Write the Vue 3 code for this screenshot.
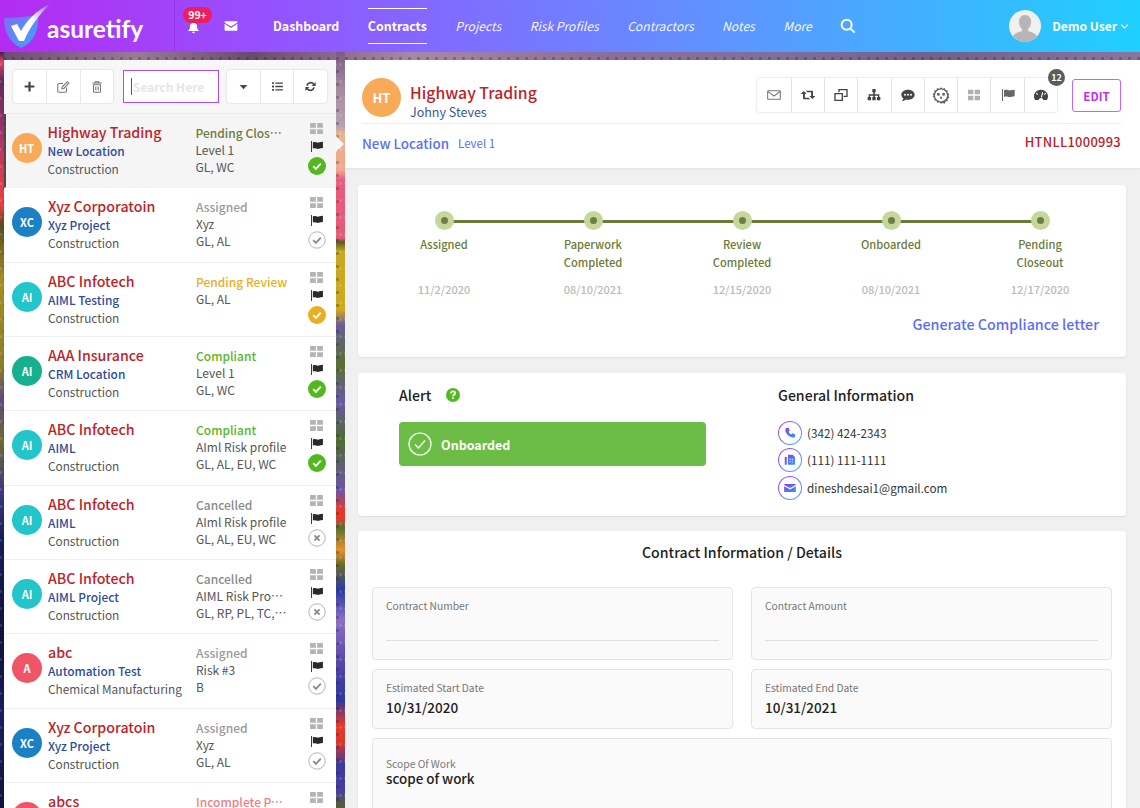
<template>
  <div class="page">
    <header class="topbar">
      <div class="brand">
        <svg class="logo" viewBox="0 0 50 50">
          <defs>
            <linearGradient id="shieldFill" x1="0" y1="0" x2="1" y2="1">
              <stop offset="0" stop-color="#7d6cf8" />
              <stop offset="1" stop-color="#3fa6f8" />
            </linearGradient>
            <linearGradient id="swooshFill" x1="0" y1="1" x2="1" y2="0">
              <stop offset="0" stop-color="#ffffff" />
              <stop offset="0.55" stop-color="#ffffff" />
              <stop offset="1" stop-color="#8f6bf5" />
            </linearGradient>
          </defs>
          <path d="M3 17C14 17 24 16 37 14C38 30 33 41 20 47C8 41 3 30 3 17Z" fill="url(#shieldFill)" />
          <path d="M10 25L16 23L20 30C26 19 36 9 49 3C40 12 29 25 23 40H18Z" fill="url(#swooshFill)" />
        </svg>
        <span class="brand-name">asuretify</span>
      </div>
      <div class="alerts">
        <div class="bell">
          <svg viewBox="0 0 24 24"><path :d="icons.bell" /></svg>
          <span class="bell-count">99+</span>
        </div>
        <svg class="mail" viewBox="0 0 24 24"><path :d="icons.mail" /></svg>
      </div>
      <nav class="nav">
        <a v-for="link in navLinks" :key="link.label" :class="link.kind">{{ link.label }}</a>
        <svg class="nav-search" viewBox="0 0 24 24"><circle cx="10" cy="10" r="7.5" /><path d="M15.5 15.5L22 22" /></svg>
      </nav>
      <div class="user">
        <svg class="user-photo" viewBox="0 0 32 32">
          <circle cx="16" cy="16" r="16" fill="#f0f0f0" />
          <path d="M16 5c4 0 6 3 6 7 0 3-1 5-3 7v2c3 1 7 2 9 5-3 4-7 6-12 6s-9-2-12-6c2-3 6-4 9-5v-2c-2-2-3-4-3-7 0-4 2-7 6-7z" fill="#b6b6b6" />
        </svg>
        <span>Demo User</span>
        <svg class="user-caret" viewBox="0 0 12 8"><path d="M1.5 1.5L6 6l4.5-4.5" /></svg>
      </div>
    </header>

    <main class="workspace">
      <aside class="list-panel">
        <div class="list-tools">
          <div class="btn-group">
            <button v-for="name in ['plus', 'edit', 'trash']" :key="name">
              <svg viewBox="0 0 24 24" :class="name"><path :d="icons[name]" /></svg>
            </button>
          </div>
          <div class="search-box"><i></i><span>Search Here</span></div>
          <div class="btn-group">
            <button v-for="name in ['caret', 'list', 'refresh']" :key="name">
              <svg viewBox="0 0 24 24" :class="name"><path :d="icons[name]" /></svg>
            </button>
          </div>
        </div>

        <div v-for="(row, index) in contracts" :key="index" class="row" :class="{ selected: index === 0 }">
          <div class="avatar" :style="{ background: row.color }">{{ row.initials }}</div>
          <div class="row-info">
            <div class="row-name">{{ row.name }}</div>
            <div class="row-project">{{ row.project }}</div>
            <div class="row-type">{{ row.type }}</div>
          </div>
          <div class="row-state">
            <div class="row-status" :style="{ color: row.statusColor }">{{ row.status }}</div>
            <div v-for="line in row.lines" :key="line" class="row-line">{{ line }}</div>
          </div>
          <div class="row-icons">
            <svg class="mini-grid" viewBox="0 0 14 12"><path :d="icons.grid" /></svg>
            <svg class="mini-flag" viewBox="0 0 14 12"><path :d="icons.flag" /></svg>
            <svg class="mark" viewBox="0 0 18 18">
              <circle cx="9" cy="9" :r="row.mark.solid ? 9 : 8.2" :fill="row.mark.solid ? row.mark.color : '#fff'" :stroke="row.mark.solid ? 'none' : '#b5b5b5'" />
              <path v-if="row.mark.kind === 'check'" d="M5.2 9.2l2.7 2.7 4.9-5.2" fill="none" :stroke="row.mark.solid ? '#fff' : '#8c8c8c'" stroke-width="1.9" />
              <path v-else d="M6.4 6.4l5.2 5.2M11.6 6.4l-5.2 5.2" fill="none" stroke="#8c8c8c" stroke-width="1.9" />
            </svg>
          </div>
        </div>
      </aside>

      <section class="detail">
        <div class="detail-head">
          <div class="head-top">
            <div class="avatar large">HT</div>
            <div class="head-title">
              <div class="head-name">Highway Trading</div>
              <div class="head-person">Johny Steves</div>
            </div>
            <div class="head-actions">
              <div class="action-group">
                <button v-for="name in actionIcons" :key="name">
                  <svg viewBox="0 0 24 24" :class="name"><path :d="icons[name]" /></svg>
                </button>
                <span class="action-count">12</span>
              </div>
              <button class="edit-btn">EDIT</button>
            </div>
          </div>
          <div class="head-bottom">
            <span class="location">New Location</span>
            <span class="level">Level 1</span>
            <span class="code">HTNLL1000993</span>
          </div>
        </div>

        <div class="card timeline-card">
          <div class="timeline">
            <div v-for="step in steps" :key="step.label" class="step">
              <div class="step-dot"></div>
              <div class="step-label">{{ step.label }}</div>
              <div class="step-date">{{ step.date }}</div>
            </div>
          </div>
          <a class="compliance">Generate Compliance letter</a>
        </div>

        <div class="card alert-card">
          <div class="alert-col">
            <div class="card-title">
              Alert
              <svg class="help" viewBox="0 0 14 14">
                <circle cx="7" cy="7" r="7" />
                <path d="M4.900 5.400c0-1.300.9-2 2.100-2s2.100.7 2.100 1.800c0 1.600-2.100 1.500-2.100 3.100" />
                <path d="M7 9.300v1.500" />
              </svg>
            </div>
            <div class="banner">
              <svg viewBox="0 0 24 24"><circle cx="12" cy="12" r="11" /><path d="M7 12.500l3.500 3.500 6.500-7.500" /></svg>
              Onboarded
            </div>
          </div>
          <div class="info-col">
            <div class="card-title">General Information</div>
            <div v-for="contact in contacts" :key="contact.text" class="contact">
              <span class="contact-icon">
                <svg viewBox="0 0 24 24"><path :d="icons[contact.icon]" fill="url(#contactFill)" /></svg>
              </span>
              {{ contact.text }}
            </div>
            <svg class="defs-only" width="0" height="0">
              <defs>
                <linearGradient id="contactFill" x1="0" y1="0" x2="1" y2="1">
                  <stop offset="0" stop-color="#8a3cf0" />
                  <stop offset="1" stop-color="#2a9ff0" />
                </linearGradient>
              </defs>
            </svg>
          </div>
        </div>

        <div class="card details-card">
          <div class="details-title">Contract Information / Details</div>
          <div class="fields">
            <div v-for="field in fields" :key="field.label" class="field" :class="field.kind">
              <label>{{ field.label }}</label>
              <div class="field-value">{{ field.value }}</div>
            </div>
          </div>
        </div>
      </section>
    </main>
  </div>
</template>

<script setup>
const icons = {
  bell: 'M12 2a1.800 1.800 0 0 1 1.800 1.800C17 4.600 18.500 7 18.500 10c0 4 1 5.500 3 7.500v1h-19v-1c2-2 3-3.500 3-7.500 0-3 1.500-5.400 4.700-6.200A1.800 1.800 0 0 1 12 2zM9.500 20h5a2.500 2.500 0 0 1-5 0z',
  mail: 'M2 4h20a1 1 0 0 1 1 1v.8L12 13 1 5.800V5a1 1 0 0 1 1-1zM1 8.200l11 7.200 11-7.200V19a1 1 0 0 1-1 1H2a1 1 0 0 1-1-1z',
  plus: 'M10 3h4v7h7v4h-7v7h-4v-7H3v-4h7z',
  edit: 'M18 13v6a2 2 0 0 1-2 2H5a2 2 0 0 1-2-2V8a2 2 0 0 1 2-2h7M10 15l.6-3.400L19.500 3 22 5.500 13.400 14.400z',
  trash: 'M9 3h6v2H9zM4 5h16M6 8v11.500A1.500 1.500 0 0 0 7.500 21h9a1.500 1.500 0 0 0 1.500-1.500V8zM10 11v7M14 11v7',
  caret: 'M5 9h14l-7 8z',
  list: 'M2 4h3.500v3.500H2zM8 4.500h14v2.500H8zM2 10.200h3.500v3.500H2zM8 10.700h14v2.500H8zM2 16.500h3.500V20H2zM8 17h14v2.500H8z',
  refresh: 'M4 10.500A8.500 8.500 0 0 1 18.800 6.300L21.500 3.500V11h-7.500l2.700-2.700A5.700 5.700 0 0 0 7 10.500zM20 13.500A8.500 8.500 0 0 1 5.200 17.700L2.500 20.500V13H10l-2.700 2.700A5.700 5.700 0 0 0 17 13.500z',
  envelope: 'M3.500 5.500h17a1 1 0 0 1 1 1v11a1 1 0 0 1-1 1h-17a1 1 0 0 1-1-1v-11a1 1 0 0 1 1-1zM3 7l9 6.500L21 7',
  retweet: 'M5.500 6L10 10.500H7.300V16H13l2.500 2.500H6a1.500 1.500 0 0 1-1.500-1.500v-6.500H1zM8.500 5.500H18a1.500 1.500 0 0 1 1.500 1.500v6.500H23L18.500 18 14 13.500h2.700V8H11z',
  clone: 'M8 3h14v12h-6v-2h4V5H10v3H8zM2 9h13v12H2zM4 11v8h9v-8z',
  sitemap: 'M9.500 3h5v5h-1.300v3H20v4h1.500v5h-5v-5H18v-2h-4.800v2h1.300v5h-5v-5h1.300v-2H6v2h1.500v5h-5v-5H4v-4h6.800V8H9.500z',
  comment: 'M12 4c5.800 0 10 3.300 10 7.500S17.800 19 12 19c-1 0-2-.1-2.900-.3C7.500 20 5.500 21 3 21c1.300-1.300 2-2.700 2.200-4C3.200 15.600 2 13.700 2 11.500 2 7.300 6.200 4 12 4zM7.500 10a1.500 1.500 0 1 0 0 3 1.500 1.500 0 0 0 0-3zM12 10a1.500 1.500 0 1 0 0 3 1.500 1.500 0 0 0 0-3zM16.500 10a1.500 1.500 0 1 0 0 3 1.500 1.500 0 0 0 0-3z',
  badge: 'M12 1.500l2.200 2 2.800-.9 1.100 2.800 2.900.6-.2 2.900 2.400 1.700L21.800 13l1.400 2.500-2.400 1.700.2 2.900-2.900.6-1.100 2.800-2.800-.9L12 23.500l-2.200-2-2.800.9-1.100-2.800-2.900-.6.2-2.900-2.400-1.700L2.200 13 .8 10.600l2.400-1.700L3 6l2.900-.6L7 2.600l2.800.9zM12 4.500a8 8 0 1 0 0 16 8 8 0 0 0 0-16zM8.500 9a2 2 0 1 0 0 4 2 2 0 0 0 0-4zM15.500 9a2 2 0 1 0 0 4 2 2 0 0 0 0-4zM12 14a1.500 1.500 0 1 0 0 3 1.500 1.500 0 0 0 0-3z',
  apps: 'M3 4h8v7H3zM13 4h8v7h-8zM3 13h8v7H3zM13 13h8v7h-8z',
  pennant: 'M3 3h1.500v18H3zM6 5c4-2 7 1 10 0 2-.6 4-1 6-1v10c-2 0-4 .4-6 1-3 1-6-2-10 0z',
  gauge: 'M12 4C6 4 1.500 8.500 1.500 14c0 2.200.7 4 1.800 5.500h5.200c.3-1.800 1.800-3 3.500-3s3.200 1.200 3.500 3h5.200c1.100-1.500 1.800-3.300 1.800-5.500C22.500 8.500 18 4 12 4zM13.700 7.500l1.600.4-1.900 7.700-1.600-.4zM5.500 8.800l2.300 2-1 1.200-2.300-2zM18.500 8.800l1 1.200-2.300 2-1-1.200z',
  grid: 'M0 0h6.300v5.200H0zM7.700 0H14v5.200H7.700zM0 6.800h6.300V12H0zM7.700 6.800H14V12H7.700z',
  flag: 'M1 0h1v12H1zM3 1.500c2.500-1 4.500.8 6.500.2 1.500-.5 3-.9 4.500-.9v6.800c-1.500 0-3 .4-4.500.9-2 .6-4-1.200-6.500-.2z',
  phone: 'M7 3l3 .5 1.500 4.500-2 1.800c1 2.200 2.700 3.900 4.700 4.800l1.800-2 4.500 1.500.5 3c0 1.800-1.600 3-3.500 2.900C10.500 19.500 4.500 13.500 4 7c0-2 1.300-3.800 3-4z',
  fax: 'M3 7h3.500v13H3zM8.500 3h8l4 4v13h-12zM11 10v2h2v-2zM15 10v2h2v-2zM11 14v2h2v-2zM15 14v2h2v-2z',
  mailSolid: 'M3 5h18a1 1 0 0 1 1 1v.7L12 12 2 6.700V6a1 1 0 0 1 1-1zM2 9l10 5.500L22 9v9a1 1 0 0 1-1 1H3a1 1 0 0 1-1-1z',
}

const navLinks = [
  { label: 'Dashboard', kind: 'strong' },
  { label: 'Contracts', kind: 'strong current' },
  { label: 'Projects', kind: 'soft' },
  { label: 'Risk Profiles', kind: 'soft' },
  { label: 'Contractors', kind: 'soft' },
  { label: 'Notes', kind: 'soft' },
  { label: 'More', kind: 'soft' },
]

const actionIcons = ['envelope', 'retweet', 'clone', 'sitemap', 'comment', 'badge', 'apps', 'pennant', 'gauge']

const okMark = { kind: 'check', solid: true, color: '#52b81f' }
const warnMark = { kind: 'check', solid: true, color: '#e8af22' }
const openMark = { kind: 'check', solid: false }
const closedMark = { kind: 'cross', solid: false }

const contracts = [
  { initials: 'HT', color: '#f9aa58', name: 'Highway Trading', project: 'New Location', type: 'Construction', status: 'Pending Closeout', statusColor: '#6e7b3c', lines: ['Level 1', 'GL, WC'], mark: okMark },
  { initials: 'XC', color: '#1c80c6', name: 'Xyz Corporatoin', project: 'Xyz Project', type: 'Construction', status: 'Assigned', statusColor: '#9a9a9a', lines: ['Xyz', 'GL, AL'], mark: openMark },
  { initials: 'AI', color: '#22c5c9', name: 'ABC Infotech', project: 'AIML Testing', type: 'Construction', status: 'Pending Review', statusColor: '#e8af22', lines: ['GL, AL'], mark: warnMark },
  { initials: 'AI', color: '#16b08f', name: 'AAA Insurance', project: 'CRM Location', type: 'Construction', status: 'Compliant', statusColor: '#58b82a', lines: ['Level 1', 'GL, WC'], mark: okMark },
  { initials: 'AI', color: '#22c5c9', name: 'ABC Infotech', project: 'AIML', type: 'Construction', status: 'Compliant', statusColor: '#58b82a', lines: ['AIml Risk profile', 'GL, AL, EU, WC'], mark: okMark },
  { initials: 'AI', color: '#22c5c9', name: 'ABC Infotech', project: 'AIML', type: 'Construction', status: 'Cancelled', statusColor: '#8a8a8a', lines: ['AIml Risk profile', 'GL, AL, EU, WC'], mark: closedMark },
  { initials: 'AI', color: '#22c5c9', name: 'ABC Infotech', project: 'AIML Project', type: 'Construction', status: 'Cancelled', statusColor: '#8a8a8a', lines: ['AIML Risk Profile Name', 'GL, RP, PL, TC, EU'], mark: closedMark },
  { initials: 'A', color: '#ef5566', name: 'abc', project: 'Automation Test', type: 'Chemical Manufacturing', status: 'Assigned', statusColor: '#9a9a9a', lines: ['Risk #3', 'B'], mark: openMark },
  { initials: 'XC', color: '#1c80c6', name: 'Xyz Corporatoin', project: 'Xyz Project', type: 'Construction', status: 'Assigned', statusColor: '#9a9a9a', lines: ['Xyz', 'GL, AL'], mark: openMark },
  { initials: 'A', color: '#ef5566', name: 'abcs', project: 'Automation Test', type: 'Construction', status: 'Incomplete Paperwork', statusColor: '#ef7f88', lines: ['Risk #3', 'B'], mark: openMark },
]

const steps = [
  { label: 'Assigned', date: '11/2/2020' },
  { label: 'Paperwork Completed', date: '08/10/2021' },
  { label: 'Review Completed', date: '12/15/2020' },
  { label: 'Onboarded', date: '08/10/2021' },
  { label: 'Pending Closeout', date: '12/17/2020' },
]

const contacts = [
  { icon: 'phone', text: '(342) 424-2343' },
  { icon: 'fax', text: '(111) 111-1111' },
  { icon: 'mailSolid', text: 'dineshdesai1@gmail.com' },
]

const fields = [
  { label: 'Contract Number', value: '', kind: 'empty' },
  { label: 'Contract Amount', value: '', kind: 'empty' },
  { label: 'Estimated Start Date', value: '10/31/2020', kind: 'short' },
  { label: 'Estimated End Date', value: '10/31/2021', kind: 'short' },
  { label: 'Scope Of Work', value: 'scope of work', kind: 'wide' },
]
</script>

<style>
html,
body {
  overflow: hidden;
}
</style>

<style scoped>
.page {
  width: 1140px;
  height: 808px;
  overflow: hidden;
  font-family: "Noto Sans CJK SC", "Noto Sans", sans-serif;
  color: #333;
  /* flower photo: only the thin strips around the panels ever show */
  background:
    radial-gradient(circle, rgba(25, 30, 15, 0.3) 1px, transparent 2px) 0 0 / 9px 13px,
    radial-gradient(circle, rgba(255, 255, 255, 0.14) 1px, transparent 2px) 3px 5px / 5px 17px,
    linear-gradient(180deg, #3c2244 52px, #e2415f 62px, #5d2a5c 80px, #a0306e 130px, #d63a55 170px, #e84040 205px, #5a4a20 225px, #a58e22 280px, #8d7d28 365px, #5c4a7e 400px, #6f6a30 440px, #3f3a80 490px, #161c58 540px, #10123c 640px, #1a1e60 720px, #0f1238 808px) 0 0 / 4px 100% no-repeat,
    linear-gradient(180deg, #7c5a86 52px, #a88aa0 90px, #b5a0b5 125px, #eab590 135px, #efa98c 170px, #e85a80 180px, #e65a78 238px, #5d5a26 242px, #c8a824 252px, #cdaa1e 310px, #6a5a9a 325px, #58702f 365px, #6b58a6 400px, #4e6a30 440px, #6b55a8 490px, #e6392a 510px, #e6392a 518px, #58702f 528px, #e89030 550px, #6a6a2a 565px, #2a3aa6 590px, #8a70c6 620px, #5a48a8 660px, #2a36a0 700px, #e83a2a 725px, #d8382a 742px, #3a3a9e 765px, #4a3ea0 790px, #56602a 808px) 336px 0 / 9px 100% no-repeat,
    linear-gradient(90deg, #6d4a74, #9a7a96 12%, #6a4a70 22%, #a788a4 36%, #8e6f98 52%, #7f6f9c 68%, #735f8c 82%, #8b75a0 100%);
}

.topbar {
  height: 52px;
  display: flex;
  align-items: center;
  color: #fff;
  background: linear-gradient(90deg, #b42bf2 0, #8d5cff 340px, #5c96ff 740px, #1fd0fe 1140px);
}

.brand {
  width: 175px;
  height: 100%;
  display: flex;
  align-items: center;
  flex: none;
  border-right: 1px solid rgba(150, 40, 220, 0.6);
  box-sizing: border-box;
}

.logo {
  width: 50px;
  height: 50px;
  margin-left: 1px;
  flex: none;
}

.brand-name {
  margin-left: -4px;
  margin-top: 6px;
  font-family: Lato, sans-serif;
  font-weight: 700;
  font-size: 24.500px;
  line-height: 30px;
}

.alerts {
  width: 83px;
  display: flex;
  align-items: center;
  flex: none;
}

.bell {
  position: relative;
  width: 13px;
  height: 13px;
  margin-left: 12px;
  margin-top: 3px;
}

.bell svg {
  display: block;
  width: 13px;
  height: 13px;
  fill: #fff;
}

.bell-count {
  position: absolute;
  left: -4px;
  top: -14px;
  width: 29px;
  height: 16px;
  border-radius: 8px;
  background: #ee1d5c;
  font-size: 10.500px;
  font-weight: 700;
  line-height: 16px;
  text-align: center;
}

.mail {
  width: 14px;
  height: 14px;
  margin-left: 24px;
  fill: #fff;
}

.nav {
  display: flex;
  align-items: center;
  gap: 28.500px;
  height: 100%;
  flex: none;
  margin-left: 15px;
  font-size: 12.400px;
  line-height: 20px;
}

.nav a {
  display: block;
}

.nav .strong {
  font-weight: 700;
}

.nav .soft {
  font-size: 12.150px;
  font-style: italic;
  color: rgba(255, 255, 255, 0.95);
}

.nav .current {
  padding: 7px 0;
  border-top: 1px solid #fff;
  border-bottom: 1px solid #fff;
}

.nav-search {
  width: 16px;
  height: 16px;
  fill: none;
  stroke: #fff;
  stroke-width: 3;
}

.user {
  margin-left: auto;
  margin-right: 11px;
  display: flex;
  align-items: center;
  font-size: 12.100px;
  font-weight: 700;
  line-height: 20px;
}

.user-photo {
  width: 32px;
  height: 32px;
  margin-right: 11px;
}

.user-caret {
  width: 9px;
  height: 7px;
  margin-left: 3px;
  fill: none;
  stroke: #fff;
  stroke-width: 1.500;
}

.workspace {
  height: 756px;
  padding: 8px 0 0 4px;
  display: flex;
  gap: 9px;
  box-sizing: border-box;
}

.list-panel {
  width: 332px;
  flex: none;
  background: #fff;
}

.list-tools {
  height: 54px;
  padding: 10px 9px 0;
  display: flex;
  box-sizing: border-box;
  background: #f7f7f7;
  border-bottom: 1px solid #ececec;
}

.btn-group {
  display: flex;
  height: 33px;
  border-radius: 3px;
  background: #fff;
  box-shadow: 0 0 2px rgba(0, 0, 0, 0.22);
}

.btn-group button {
  width: 33.300px;
  height: 33px;
  padding: 0;
  display: flex;
  align-items: center;
  justify-content: center;
  border: 0;
  border-left: 1px solid #e6e6e6;
  background: none;
}

.btn-group button:first-child {
  border-left: 0;
}

.btn-group svg {
  width: 13px;
  height: 13px;
  fill: #444;
}

.btn-group .edit,
.btn-group .trash {
  fill: none;
  stroke: #777;
  stroke-width: 1.800;
  width: 14px;
  height: 14px;
}

.search-box {
  width: 96px;
  height: 33px;
  margin: 0 8px 0 10px;
  padding-left: 7px;
  display: flex;
  align-items: center;
  box-sizing: border-box;
  border: 1.500px solid #b44af0;
  background: #fff;
  font-size: 12px;
  font-weight: 700;
  color: #e6e6e6;
}

.search-box i {
  width: 1px;
  height: 17px;
  margin-right: 1px;
  background: #555;
}

.row {
  height: 74.330px;
  padding: 8px 10.500px 0 8px;
  display: flex;
  position: relative;
  box-sizing: border-box;
  background: #fff;
  border-bottom: 1px solid #f0f0f0;
}

.row.selected {
  padding-left: 5.500px;
  border-left: 2.500px solid #4a4a4a;
  background: #f5f5f5;
}

.row.selected::after {
  content: "";
  position: absolute;
  left: 100%;
  top: 22px;
  border-style: solid;
  border-width: 8px 0 8px 8px;
  border-color: transparent transparent transparent #f8f8f8;
}

.avatar {
  width: 30px;
  height: 30px;
  margin: 11px 6px 0 0;
  flex: none;
  border-radius: 50%;
  color: #fff;
  font-size: 11px;
  font-weight: 700;
  line-height: 30px;
  text-align: center;
}

.avatar.large {
  width: 39px;
  height: 39px;
  margin: 0 9px 0 0;
  background: #f9aa58;
  font-size: 13px;
  line-height: 39px;
}

.row-info {
  width: 148px;
  flex: none;
  overflow: hidden;
}

.row-name {
  font-size: 14.200px;
  font-weight: 500;
  line-height: 20px;
  color: #bd2329;
}

.row-project {
  font-size: 11.900px;
  font-weight: 500;
  line-height: 17px;
  color: #2e4c9c;
}

.row-type {
  font-size: 11.800px;
  line-height: 19px;
  color: #555;
  white-space: nowrap;
}

.row-state {
  width: 93px;
  flex: none;
  padding-top: 2px;
  overflow: hidden;
  font-family: "Noto Sans CJK KR", "Noto Sans", sans-serif;
  font-size: 12px;
  line-height: 17px;
}

.row-status,
.row-line {
  white-space: nowrap;
  overflow: hidden;
  text-overflow: ellipsis;
}

.row-status {
  font-weight: 500;
}

.row-line {
  color: #555;
}

.row-icons {
  margin-left: auto;
  width: 18px;
  padding-top: 1px;
  display: flex;
  flex-direction: column;
  align-items: center;
}

.mini-grid {
  width: 13px;
  height: 11px;
  fill: #b4b4b4;
}

.mini-flag {
  width: 13px;
  height: 11px;
  margin-top: 7px;
  fill: #2a2a2a;
}

.mark {
  width: 18px;
  height: 18px;
  margin-top: 5px;
}

.detail {
  width: 795px;
  flex: none;
  background: #f0f0f0;
}

.detail-head {
  height: 108px;
  padding: 18px 19px 0 17px;
  box-sizing: border-box;
  background: #fff;
  box-shadow: 0 1px 2px rgba(0, 0, 0, 0.06);
}

.head-top {
  height: 45px;
  display: flex;
  border-bottom: 1px solid #ececec;
}

.head-title {
  padding-top: 2px;
}

.head-name {
  font-size: 15.800px;
  font-weight: 500;
  line-height: 25px;
  color: #bd2329;
}

.head-person {
  font-size: 12.500px;
  line-height: 14px;
  color: #3b5590;
}

.head-actions {
  margin-left: auto;
  display: flex;
  align-items: flex-start;
}

.action-group {
  position: relative;
  display: flex;
  height: 34px;
  border-radius: 3px;
  background: #fff;
  box-shadow: 0 0 2px rgba(0, 0, 0, 0.25);
}

.action-group button {
  width: 33.300px;
  height: 34px;
  padding: 0;
  display: flex;
  align-items: center;
  justify-content: center;
  border: 0;
  border-left: 1px solid #e2e2e2;
  background: none;
}

.action-group button:first-child {
  border-left: 0;
}

.action-group svg {
  width: 16px;
  height: 16px;
  fill: #444;
  fill-rule: evenodd;
}

.action-group .envelope {
  fill: none;
  stroke: #777;
  stroke-width: 1.600;
}

.action-group .badge {
  width: 18px;
  height: 18px;
  fill: #666;
}

.action-group .apps {
  fill: #b0b0b0;
}

.action-group .pennant {
  fill: #666;
}

.action-count {
  position: absolute;
  right: -8px;
  top: -9px;
  width: 17px;
  height: 17px;
  border-radius: 50%;
  background: #5c5c5c;
  color: #fff;
  font-size: 9px;
  font-weight: 700;
  line-height: 17px;
  text-align: center;
}

.edit-btn {
  width: 49px;
  height: 33px;
  margin-left: 15px;
  margin-top: 1px;
  padding: 0;
  border: 1.500px solid #c268f2;
  border-radius: 3px;
  background: #fff;
  color: #c030f0;
  font-family: inherit;
  font-size: 11.500px;
  font-weight: 700;
}

.head-bottom {
  display: flex;
  align-items: center;
  padding-top: 6.500px;
  line-height: 22px;
}

.location {
  font-size: 13.400px;
  font-weight: 500;
  color: #5c6ef8;
}

.level {
  margin-left: 9px;
  font-size: 11.500px;
  color: #5c6ef8;
}

.code {
  margin-left: auto;
  margin-bottom: 3px;
  font-size: 12.900px;
  font-weight: 500;
  letter-spacing: 0.300px;
  color: #b9232a;
}

.card {
  width: 768px;
  margin-left: 13px;
  box-sizing: border-box;
  border-radius: 4px;
  background: #fff;
  box-shadow: 0 1px 2px rgba(0, 0, 0, 0.08);
}

.timeline-card {
  height: 172px;
  margin-top: 17px;
  padding: 26px 12px 0 11.500px;
}

.timeline {
  display: grid;
  grid-template-columns: repeat(5, 149px);
}

.step {
  position: relative;
  display: flex;
  flex-direction: column;
  align-items: center;
}

.step:not(:last-child)::before {
  content: "";
  position: absolute;
  left: 50%;
  top: 9px;
  width: 100%;
  height: 3px;
  background: #6b7a35;
}

.step-dot {
  position: relative;
  width: 19px;
  height: 19px;
  border-radius: 50%;
  background: #c5d79a;
}

.step-dot::after {
  content: "";
  position: absolute;
  left: 6px;
  top: 6px;
  width: 7px;
  height: 7px;
  border-radius: 50%;
  background: #6f7d4b;
}

.step-label {
  width: 80px;
  height: 36px;
  margin-top: 5px;
  font-size: 11.100px;
  font-weight: 500;
  line-height: 18px;
  text-align: center;
  color: #6b7a35;
}

.step-date {
  margin-top: 9px;
  font-size: 11px;
  font-weight: 500;
  line-height: 18px;
  color: #bbb;
}

.compliance {
  display: block;
  margin-top: 15px;
  padding-right: 15px;
  font-size: 14.300px;
  font-weight: 500;
  line-height: 22px;
  text-align: right;
  color: #5c6ef8;
}

.alert-card {
  height: 143px;
  margin-top: 16px;
  padding: 11px 0 0 41px;
  display: flex;
}

.card-title {
  display: flex;
  align-items: center;
  font-size: 14.100px;
  font-weight: 500;
  line-height: 22px;
  color: #222;
}

.help {
  width: 14px;
  height: 14px;
  margin-left: 15px;
  fill: none;
  stroke: #fff;
  stroke-width: 1.800;
}

.help circle {
  fill: #52b81f;
  stroke: none;
}

.alert-col {
  width: 307px;
  margin-right: 72px;
}

.banner {
  height: 44px;
  margin-top: 16px;
  padding-left: 9px;
  display: flex;
  align-items: center;
  border-radius: 4px;
  background: #6cbd45;
  color: #fff;
  font-size: 12.500px;
  font-weight: 700;
}

.banner svg {
  width: 24px;
  height: 24px;
  margin-right: 9px;
  fill: none;
  stroke: #fff;
  stroke-width: 1.200;
}

.contact {
  height: 27.500px;
  display: flex;
  align-items: center;
  font-size: 11.700px;
  line-height: 18px;
  color: #333;
}

.card-title + .contact {
  margin-top: 13px;
}

.contact-icon {
  width: 24px;
  height: 24px;
  margin-right: 5px;
  display: flex;
  align-items: center;
  justify-content: center;
  box-sizing: border-box;
  border: 1.200px solid transparent;
  border-radius: 50%;
  background:
    linear-gradient(#fff, #fff) padding-box,
    linear-gradient(135deg, #c02cf0, #30b8ff) border-box;
}

.contact-icon svg {
  width: 14px;
  height: 14px;
  fill-rule: evenodd;
}

.defs-only {
  position: absolute;
}

.details-card {
  height: 300px;
  margin-top: 15px;
  padding: 0 14px;
}

.details-title {
  height: 56px;
  font-size: 14.100px;
  font-weight: 500;
  line-height: 42px;
  text-align: center;
  color: #222;
}

.fields {
  display: grid;
  grid-template-columns: 361px 361px;
  column-gap: 18px;
  row-gap: 9px;
}

.field {
  padding: 9px 13px 0;
  box-sizing: border-box;
  border: 1px solid #e4e4e4;
  border-radius: 4px;
  background: #fafafa;
}

.field label {
  display: block;
  font-size: 10.250px;
  line-height: 18px;
  color: #777;
}

.field.empty {
  height: 73px;
}

.field.empty .field-value {
  height: 25px;
  border-bottom: 1px solid #dedede;
}

.field.short {
  height: 60px;
}

.field.short .field-value {
  font-size: 13.500px;
  font-weight: 500;
  line-height: 20px;
  color: #222;
}

.field.wide {
  grid-column: 1 / 3;
  height: 100px;
  padding-top: 17px;
}

.field.wide label {
  line-height: 15px;
}

.field.wide .field-value {
  font-size: 13.400px;
  font-weight: 500;
  line-height: 15px;
  color: #222;
}
</style>
